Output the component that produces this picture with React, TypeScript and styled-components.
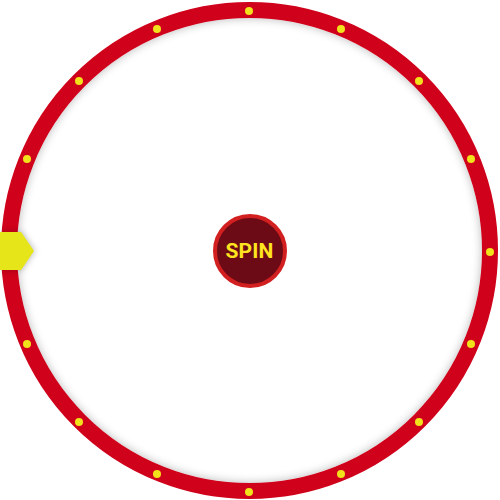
import React from "react";
import styled, { createGlobalStyle } from "styled-components";

const Global = createGlobalStyle`
  html, body { margin: 0; padding: 0; background: #ffffff; }
  body { width: 500px; height: 500px; overflow: hidden; }
`;

const Stage = styled.div`
  width: 500px;
  height: 500px;
  padding: 2px 0 0 1px;
  box-sizing: border-box;
  position: relative;
`;

const Wheel = styled.div`
  position: relative;
  width: 497px;
  height: 497px;
  box-sizing: border-box;
  border: 16px solid #d0021b;
  border-radius: 50%;
  background: #ffffff;
  box-shadow: inset 0 0 10px rgba(0, 0, 0, 0.28);
  display: flex;
  align-items: center;
  justify-content: center;
`;

const Dot = styled.span`
  position: absolute;
  width: 8px;
  height: 8px;
  margin: -4px 0 0 -4px;
  border-radius: 50%;
  background: #f2e21c;
`;

const SpinButton = styled.button`
  width: 74px;
  height: 74px;
  box-sizing: border-box;
  border-radius: 50%;
  border: 4px solid #d21f1f;
  background: #6c0a15;
  color: #ffe41f;
  font-family: Roboto, "Liberation Sans", sans-serif;
  font-weight: 700;
  font-size: 21px;
  letter-spacing: 0.2px;
  padding: 0;
  cursor: pointer;
  display: flex;
  align-items: center;
  justify-content: center;
`;

const Pointer = styled.div`
  width: 34px;
  height: 38px;
  background: #e6e519;
  clip-path: polygon(0 0, 62% 0, 100% 50%, 62% 100%, 0 100%);
`;

const PointerShadow = styled.div`
  position: absolute;
  left: 0;
  top: 232px;
  filter: drop-shadow(1px 0 3px rgba(0, 0, 0, 0.25));
`;

const DOTS = 16;
const CX = 232;
const CY = 233.5;
const R = 240.5;

export default function App() {
  const dots = Array.from({ length: DOTS }, (_, i) => {
    const a = (i * 2 * Math.PI) / DOTS;
    return { x: CX + R * Math.sin(a), y: CY - R * Math.cos(a) };
  });
  return (
    <>
      <Global />
      <Stage>
        <Wheel>
          {dots.map((d, i) => (
            <Dot key={i} style={{ left: d.x, top: d.y }} />
          ))}
          <SpinButton>SPIN</SpinButton>
        </Wheel>
        <PointerShadow>
          <Pointer />
        </PointerShadow>
      </Stage>
    </>
  );
}
